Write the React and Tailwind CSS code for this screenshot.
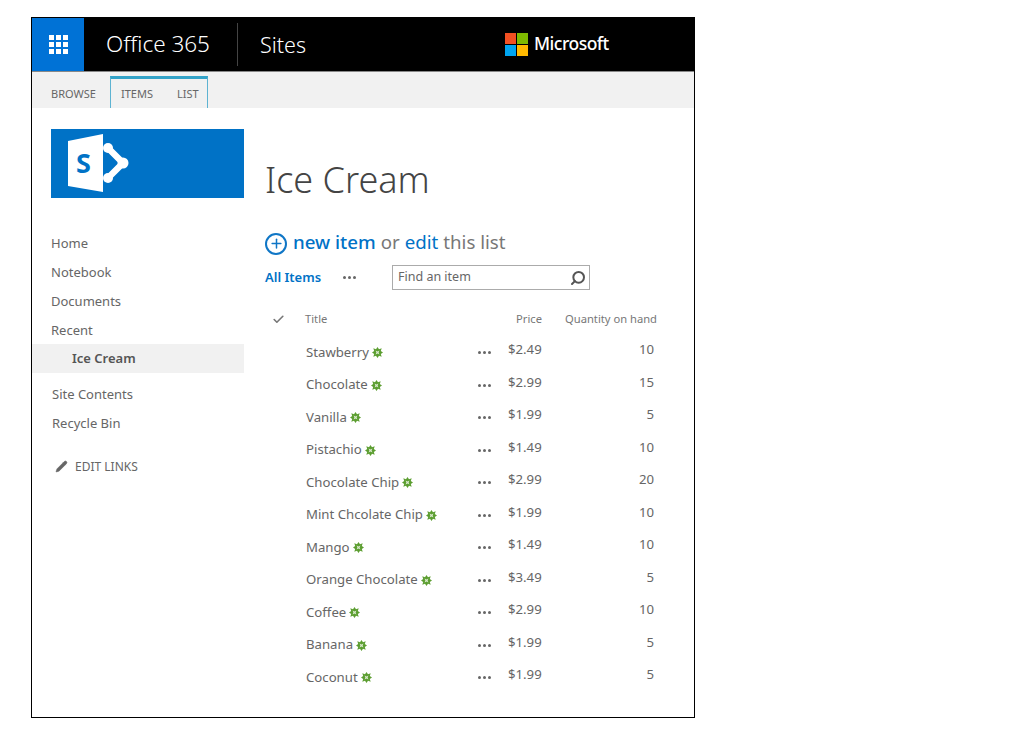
import { Check, Pencil, Plus, Search } from 'lucide-react';

const navTop = ['Home', 'Notebook', 'Documents', 'Recent'];

const items = [
  ['Stawberry', '$2.49', 10],
  ['Chocolate', '$2.99', 15],
  ['Vanilla', '$1.99', 5],
  ['Pistachio', '$1.49', 10],
  ['Chocolate Chip', '$2.99', 20],
  ['Mint Chcolate Chip', '$1.99', 10],
  ['Mango', '$1.49', 10],
  ['Orange Chocolate', '$3.49', 5],
  ['Coffee', '$2.99', 10],
  ['Banana', '$1.99', 5],
  ['Coconut', '$1.99', 5],
];

function Dots() {
  return (
    <span className="flex gap-[2px]">
      <span className="w-[3px] h-[3px] rounded-full bg-[#666]" />
      <span className="w-[3px] h-[3px] rounded-full bg-[#666]" />
      <span className="w-[3px] h-[3px] rounded-full bg-[#666]" />
    </span>
  );
}

function NewBadge() {
  return (
    <svg width="11" height="11" viewBox="0 0 11 11" className="shrink-0">
      <path d="M5.5 0 7 2.2 9.7 1.3 8.8 4 11 5.5 8.8 7 9.7 9.7 7 8.8 5.5 11 4 8.8 1.3 9.7 2.2 7 0 5.5 2.2 4 1.3 1.3 4 2.2Z" fill="#5c9e31" />
      <path d="M3.6 3.6 5.5 4.4 7.4 3.6 6.6 5.5 7.4 7.4 5.5 6.6 3.6 7.4 4.4 5.5Z" fill="#d9e9cc" />
    </svg>
  );
}

function SharePointLogo() {
  return (
    <svg width="62" height="60" viewBox="0 0 62 60">
      <path d="M0 8 35 1V59L0 53Z" fill="#fff" />
      <text x="8" y="40" fontSize="27" fontWeight="700" fill="#0072c6" fontFamily="'Noto Sans', sans-serif">S</text>
      <path d="M40 15 55 30 40 45" fill="none" stroke="#fff" strokeWidth="6.5" />
      <circle cx="40" cy="15" r="5" fill="#fff" />
      <circle cx="55" cy="30" r="5.5" fill="#fff" />
      <circle cx="40" cy="45" r="5" fill="#fff" />
    </svg>
  );
}

export default function App() {
  return (
    <div className="w-[1021px] h-[737px] bg-white pt-[17px] pl-[31px] font-['Noto_Sans',sans-serif]">
      <div className="w-[664px] h-[701px] border border-black flex flex-col overflow-hidden">
        {/* Suite bar */}
        <div className="h-[53px] bg-black flex items-center shrink-0 border-b border-[#888] box-content">
          <div className="w-[52px] h-full bg-[#0072d6] flex items-center justify-center">
            <div className="grid grid-cols-3 gap-[2px]">
              {Array.from({ length: 9 }).map((_, i) => (
                <span key={i} className="w-[5px] h-[5px] bg-white" />
              ))}
            </div>
          </div>
          <span className="ml-[22px] w-[131px] text-white text-[22.5px] font-light leading-none">Office 365</span>
          <span className="w-px h-[43px] bg-[#444]" />
          <span className="ml-[22px] text-white text-[21.5px] font-light leading-none">Sites</span>
          <div className="ml-[199px] grid grid-cols-2 gap-[1px] w-[23px]">
            <span className="h-[11px] bg-[#f25022]" />
            <span className="h-[11px] bg-[#7fba00]" />
            <span className="h-[11px] bg-[#00a4ef]" />
            <span className="h-[11px] bg-[#ffb900]" />
          </div>
          <span className="ml-[6px] -mt-[2px] text-white text-[17.5px] font-medium tracking-[-0.5px] leading-none">Microsoft</span>
        </div>

        {/* Ribbon tabs */}
        <div className="h-[36px] bg-[#f1f1f1] flex items-end shrink-0 text-[11px] text-[#666]">
          <span className="ml-[19px] w-[59px] h-[32px] flex items-center pt-[4px]">BROWSE</span>
          <div className="w-[98px] h-[32px] border-x border-[#5db3d2] border-t-[3px] border-t-[#33a3c8] flex items-center pl-[10px] gap-[24px] pt-[2px]">
            <span>ITEMS</span>
            <span>LIST</span>
          </div>
        </div>

        <div className="flex flex-1">
          {/* Left nav */}
          <div className="w-[212px] shrink-0 pt-[21px]">
            <div className="ml-[19px] w-[193px] h-[69px] bg-[#0072c6] pl-[17px] pt-[4px]">
              <SharePointLogo />
            </div>
            <nav className="mt-[31px] text-[13px] text-[#666]">
              {navTop.map((n) => (
                <div key={n} className="h-[28.8px] flex items-center pl-[19px] pt-[1px]">{n}</div>
              ))}
              <div className="h-[29px] flex items-center pl-[40px] pt-[1px] bg-[#f1f1f1] font-semibold text-[#555]">Ice Cream</div>
              <div className="h-[29.5px] mt-[6px] flex items-center pl-[20px] pt-[1px]">Site Contents</div>
              <div className="h-[29.5px] flex items-center pl-[20px]">Recycle Bin</div>
              <div className="mt-[14px] h-[29px] flex items-center pl-[23px] gap-[7px] text-[12px] text-[#666]">
                <Pencil size={13} fill="#666" strokeWidth={1} />
                <span>EDIT LINKS</span>
              </div>
            </nav>
          </div>

          {/* Main content */}
          <div className="flex-1 pl-[21px]">
            <h1 className="mt-[47px] h-[50px] flex items-center text-[36px] font-light text-[#444] leading-none">Ice Cream</h1>
            <div className="mt-[22px] h-[30px] flex items-center text-[18.7px] text-[#777]">
              <span className="w-[22px] h-[22px] rounded-full border-2 border-[#0f76c6] flex items-center justify-center mr-[6px] mt-[3px]">
                <Plus size={15} color="#0f76c6" strokeWidth={2.4} />
              </span>
              <span className="text-[#0072c6] font-medium">new item</span>
              <span className="ml-[5px]">or</span>
              <span className="ml-[5px] text-[#0072c6]">edit</span>
              <span className="ml-[5px]">this list</span>
            </div>
            <div className="mt-[8px] h-[25px] flex items-center">
              <span className="w-[78px] text-[13px] font-semibold text-[#0072c6]">All Items</span>
              <Dots />
              <div className="ml-[36px] w-[198px] h-[25px] border border-[#ababab] flex items-center justify-between pl-[5px] pr-[3px] text-[12.5px] text-[#666]">
                <span>Find an item</span>
                <Search size={16} color="#555" strokeWidth={3} className="-scale-x-100" />
              </div>
            </div>

            <div className="mt-[19px] ml-[7px] h-[20px] flex items-center text-[11.2px] text-[#777]">
              <Check size={13} color="#777" strokeWidth={3} />
              <span className="ml-[20px] w-[211px]">Title</span>
              <span className="w-[25px] whitespace-nowrap">Price</span>
              <span className="w-[116px] text-right">Quantity on hand</span>
            </div>

            <div className="mt-[7.5px] ml-[41px] w-[349px]">
              {items.map(([name, price, qty]) => (
                <div key={name} className="h-[32.5px] flex items-center text-[13.2px] text-[#666]">
                  <div className="w-[171px] flex items-center gap-[3px]">
                    <span className="whitespace-nowrap">{name}</span>
                    <NewBadge />
                  </div>
                  <div className="w-[31px] flex justify-start pl-[1px]"><Dots /></div>
                  <span className="-mt-[5px]">{price}</span>
                  <span className="flex-1 text-right pr-[1px] -mt-[5px]">{qty}</span>
                </div>
              ))}
            </div>
          </div>
        </div>
      </div>
    </div>
  );
}
